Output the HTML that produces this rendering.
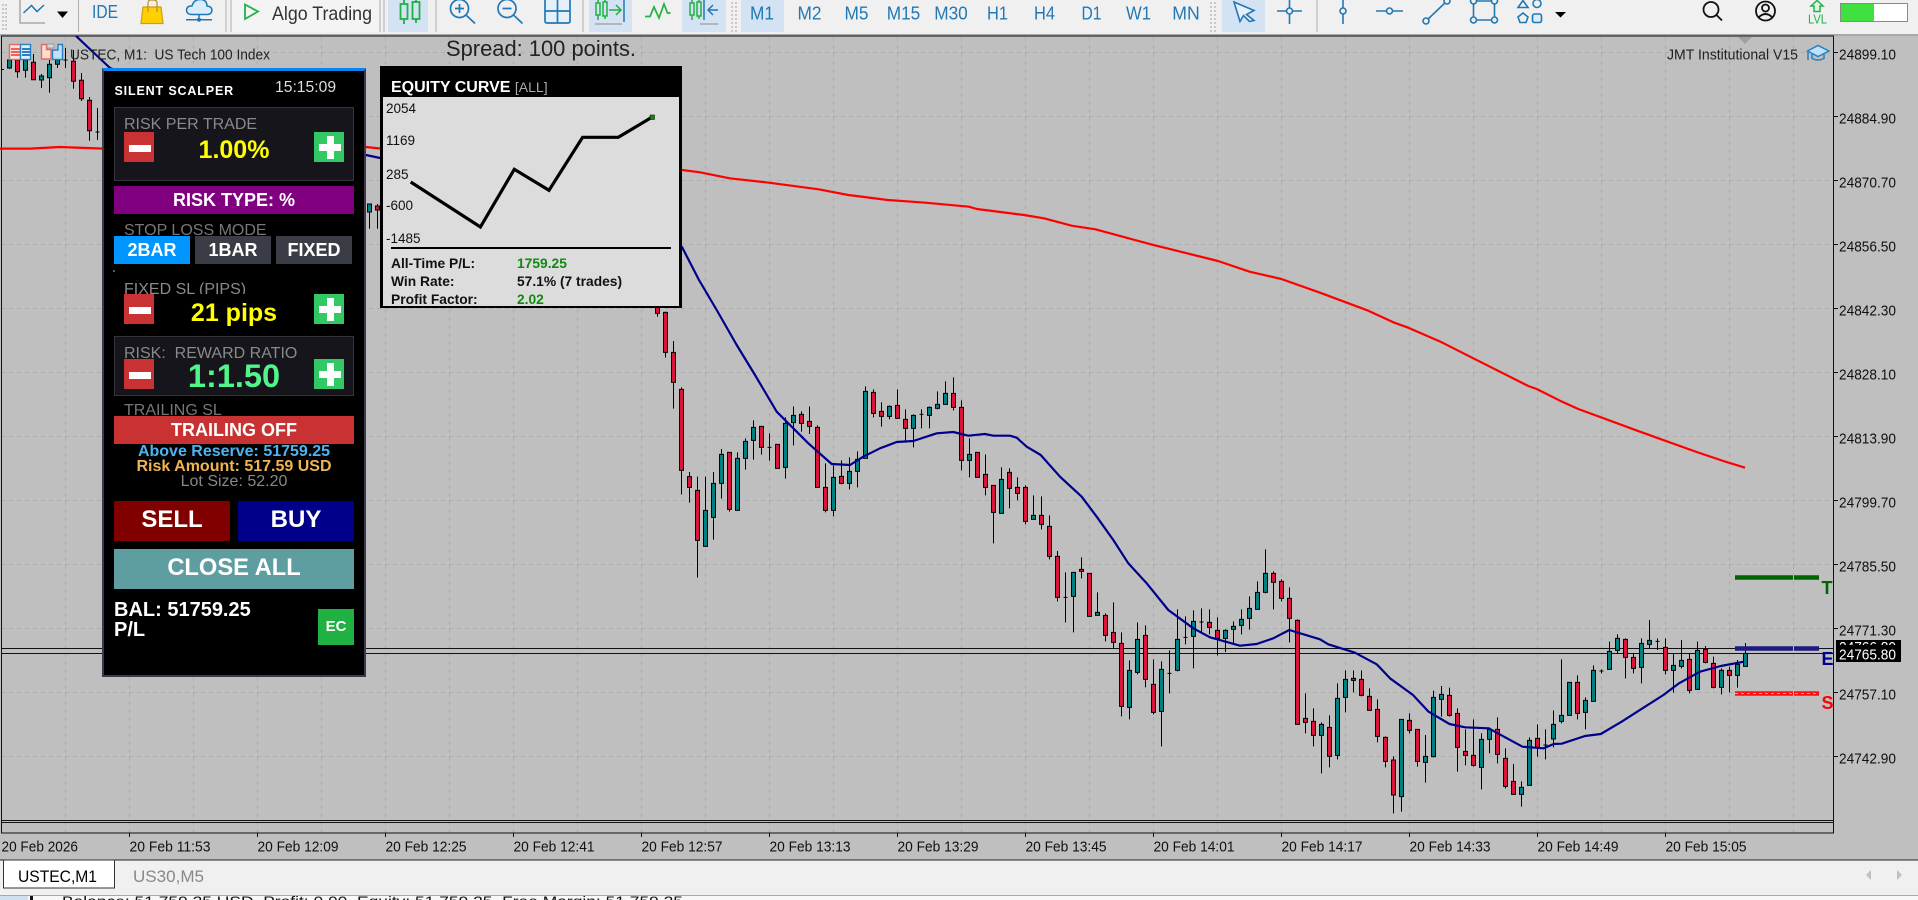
<!DOCTYPE html>
<html><head><meta charset="utf-8"><title>USTEC,M1</title>
<style>
html,body{margin:0;padding:0;width:1918px;height:900px;overflow:hidden;background:#bfbfbf}
body{position:relative;font-family:"Liberation Sans",Arial,sans-serif;filter:blur(.3px)}
svg{position:absolute;left:0;top:0}
svg text{font-family:"Liberation Sans",Arial,sans-serif}
.b{position:absolute}
.t{position:absolute;white-space:nowrap;text-align:center;overflow:hidden}
.l{text-align:left}
.bd{font-weight:bold}
</style></head><body>
<svg width="1918" height="900" viewBox="0 0 1918 900" xmlns="http://www.w3.org/2000/svg">
<defs><clipPath id="cc"><rect x="0" y="36" width="1833.5" height="797"/></clipPath></defs>
<!-- backgrounds -->
<rect width="1918" height="900" fill="#bfbfbf"/>
<rect width="1918" height="34" fill="#f0f0f0"/>
<rect y="34" width="1918" height="2" fill="#a8a8a8"/>
<!-- grid -->
<g stroke="#adadad" stroke-width="1" stroke-dasharray="4 4" fill="none">
<path d="M1 52.5H1834M1 116.5H1834M1 180.5H1834M1 244.5H1834M1 308.5H1834M1 372.5H1834M1 436.5H1834M1 500.5H1834M1 564.5H1834M1 628.5H1834M1 692.5H1834M1 756.5H1834"/>
<path d="M65.5 37V833M129.5 37V833M193.5 37V833M257.5 37V833M321.5 37V833M385.5 37V833M449.5 37V833M513.5 37V833M577.5 37V833M641.5 37V833M705.5 37V833M769.5 37V833M833.5 37V833M897.5 37V833M961.5 37V833M1025.5 37V833M1089.5 37V833M1153.5 37V833M1217.5 37V833M1281.5 37V833M1345.5 37V833M1409.5 37V833M1473.5 37V833M1537.5 37V833M1601.5 37V833M1665.5 37V833M1729.5 37V833M1793.5 37V833"/>
</g>
<!-- frame -->
<path d="M1.5 833V36H1833.5V833ZM1 820.5H1834M1 822.5H1834M1 648.5H1834M1 653.5H1834" fill="none" stroke="#111" stroke-width="1"/>
<path d="M129.5 833v4M257.5 833v4M385.5 833v4M513.5 833v4M641.5 833v4M769.5 833v4M897.5 833v4M1025.5 833v4M1153.5 833v4M1281.5 833v4M1409.5 833v4M1537.5 833v4M1665.5 833v4M1834 52.5h4M1834 116.5h4M1834 180.5h4M1834 244.5h4M1834 308.5h4M1834 372.5h4M1834 436.5h4M1834 500.5h4M1834 564.5h4M1834 628.5h4M1834 692.5h4M1834 756.5h4" stroke="#111" stroke-width="1" fill="none"/>
<path d="M1738 37H1752L1745 44Z" fill="#a0a0a0"/>
<!-- left candles -->
<g stroke="#000" stroke-width="1" clip-path="url(#cc)">
<path fill="none" d="M9.5 50V69M17.5 50V77.7M25.5 50V77.7M33.5 54V80M41.5 74V88M49.5 60V92.7M57.5 50V68M65.5 48V68M63.5 60h4M73.5 50V88.7M81.5 73V101M89.5 97V140.7M97.5 108V140M95.5 132h4M1 69.5h3M369.5 204V228.7M377.5 204V228.7"/>
<path fill="#dc143c" d="M15.5 60h4V71.7h-4zM31.5 62.3h4V79.7h-4zM71.5 61.3h4V81.3h-4zM79.5 80.3h4V98.7h-4zM87.5 100.3h4V130.7h-4zM375.5 206h4V210h-4z"/>
<path fill="#008080" d="M7.5 60h4V68h-4zM23.5 60h4V70.3h-4zM39.5 76h4V80h-4zM47.5 64.3h4V77.7h-4zM55.5 60h4V64.3h-4zM367.5 204h4V212h-4z"/>
</g>
<g stroke="#000" fill="none">
<!-- A -->
<g transform="translate(657.5,280) scale(8,.33333)">
<path vector-effect="non-scaling-stroke" d="M0 85V110M1 95V233M2 183V386M3 322V643M4 576V668M5 590V893M6 590V800M7 576V779M8 507V656M9 517V695M10 517V691M11 475V569M12 421V539M13 439V524M14 460V542M16 412V596M17 379V496M18 394V455M19 379V462M20 436V622M21 550V697M22 556V709M23 541V613M24 532V628M25 514V622M26 319V535M27 328V412M28 367V440M29 376V418M30 328V415M31 388V484M32 403V502M33 388V445M34 379V445M35 334V388M36 304V373M37 292V391M38 361V571M39 475V592M41 523V646M42 616V790M43 562V700M44 565V685M45 592V661M46 616V733M47 646V718M48 649V748M49 706V838M13.75 502h.5M32.75 403h.5"/>
<path vector-effect="non-scaling-stroke" fill="#dc143c" d="M-.25 70h.5V100h-.5zM.75 97h.5V217h-.5zM1.75 217h.5V307h-.5zM2.75 328h.5V571h-.5zM3.75 590h.5V622h-.5zM4.75 631h.5V781h-.5zM8.75 517h.5V688h-.5zM12.75 439h.5V502h-.5zM14.75 493h.5V565h-.5zM17.75 403h.5V430h-.5zM18.75 424h.5V439h-.5zM19.75 442h.5V622h-.5zM20.75 622h.5V691h-.5zM22.75 589h.5V610h-.5zM26.75 337h.5V400h-.5zM27.75 394h.5V409h-.5zM29.75 376h.5V415h-.5zM30.75 418h.5V445h-.5zM36.75 340h.5V382h-.5zM37.75 382h.5V541h-.5zM39.75 517h.5V592h-.5zM40.75 583h.5V622h-.5zM41.75 616h.5V697h-.5zM43.75 577h.5V625h-.5zM44.75 622h.5V640h-.5zM45.75 622h.5V724h-.5zM47.75 706h.5V733h-.5zM48.75 739h.5V829h-.5z"/>
<path vector-effect="non-scaling-stroke" fill="#008080" d="M5.75 691h.5V799h-.5zM6.75 610h.5V712h-.5zM7.75 523h.5V610h-.5zM9.75 535h.5V691h-.5zM10.75 484h.5V535h-.5zM11.75 442h.5V481h-.5zM15.75 430h.5V562h-.5zM16.75 406h.5V428h-.5zM21.75 592h.5V691h-.5zM23.75 574h.5V610h-.5zM24.75 538h.5V574h-.5zM25.75 334h.5V535h-.5zM28.75 379h.5V409h-.5zM31.75 406h.5V445h-.5zM33.75 382h.5V406h-.5zM34.75 373h.5V385h-.5zM35.75 340h.5V373h-.5zM38.75 523h.5V541h-.5zM42.75 598h.5V700h-.5zM46.75 706h.5V718h-.5z"/>
</g>
<!-- B -->
<g transform="translate(657.5,500) scale(8,.33333)">
<path vector-effect="non-scaling-stroke" d="M50 153V304M51 217V367M52 217V397M53 172V235M55 277V346M56 340V424M57 307V445M58 397V649M59 481V658M60 367V523M61 376V562M62 478V643M63 484V739M64 451V580M65 328V514M66 349V433M67 331V505M68 325V400M69 328V403M70 352V466M71 388V456M72 364V433M73 328V403M74 289V389M75 244V328M76 148V280M77 214V328M78 238V304M79 262V427M80 358V673M81 580V700M82 625V739M83 667V820M84 646V802M85 550V778M86 511V637M87 511V577M88 511V589M89 565V631M90 598V727M91 709V802M50.75 292h.5M63.75 520h.5M65.75 412h.5M67.75 366h.5"/>
<path vector-effect="non-scaling-stroke" fill="#dc143c" d="M49.75 169h.5V292h-.5zM52.75 208h.5V214h-.5zM53.75 220h.5V349h-.5zM55.75 346h.5V406h-.5zM56.75 397h.5V427h-.5zM57.75 430h.5V619h-.5zM60.75 406h.5V538h-.5zM61.75 553h.5V637h-.5zM68.75 367h.5V382h-.5zM69.75 391h.5V415h-.5zM76.75 220h.5V247h-.5zM77.75 244h.5V295h-.5zM78.75 295h.5V355h-.5zM79.75 361h.5V673h-.5zM80.75 655h.5V667h-.5zM81.75 664h.5V706h-.5zM83.75 682h.5V769h-.5zM86.75 535h.5V541h-.5zM87.75 538h.5V586h-.5zM88.75 589h.5V631h-.5zM89.75 628h.5V709h-.5zM90.75 712h.5V784h-.5z"/>
<path vector-effect="non-scaling-stroke" fill="#008080" d="M51.75 217h.5V289h-.5zM54.75 337h.5V346h-.5zM58.75 511h.5V622h-.5zM59.75 418h.5V517h-.5zM62.75 508h.5V634h-.5zM64.75 418h.5V511h-.5zM66.75 364h.5V409h-.5zM70.75 391h.5V415h-.5zM71.75 379h.5V388h-.5zM72.75 358h.5V376h-.5zM73.75 325h.5V355h-.5zM74.75 277h.5V328h-.5zM75.75 220h.5V277h-.5zM82.75 673h.5V706h-.5zM84.75 595h.5V766h-.5zM85.75 538h.5V592h-.5z"/>
</g>
<!-- C -->
<g transform="translate(657.5,540) scale(8,.33333)">
<path vector-effect="non-scaling-stroke" d="M92 649V820M93 538V815M94 520V580M95 568V680M96 585V728M97 452V652M98 438V530M99 443V530M100 505V695M101 568V676M102 538V680M103 580V748M104 562V640M105 532V670M106 625V745M107 672V763M108 724V800M109 592V736M110 553V650M111 568V658M112 511V622M113 358V550M114 427V526M115 406V538M116 472V568M117 376V484M118 388V400M119 305V388M120 283V340M121 295V415M122 340V400M123 295V430M124 240V325M125 295V330M126 295V403M127 340V458M128 300V385M129 340V460M130 305V450M131 318V370M132 350V445M133 385V463M134 380V457M135 360V443M136 309V379M110.75 615h.5M117.75 393h.5M124.75 304h.5"/>
<path vector-effect="non-scaling-stroke" fill="#dc143c" d="M91.75 660h.5V765h-.5zM93.75 541h.5V571h-.5zM94.75 568h.5V664h-.5zM98.75 466h.5V526h-.5zM99.75 520h.5V622h-.5zM100.75 634h.5V646h-.5zM101.75 646h.5V676h-.5zM104.75 568h.5V643h-.5zM105.75 655h.5V739h-.5zM106.75 724h.5V763h-.5zM109.75 595h.5V622h-.5zM114.75 427h.5V520h-.5zM120.75 298h.5V352h-.5zM121.75 352h.5V385h-.5zM125.75 322h.5V391h-.5zM128.75 358h.5V451h-.5zM130.75 328h.5V367h-.5zM131.75 370h.5V442h-.5zM133.75 391h.5V406h-.5z"/>
<path vector-effect="non-scaling-stroke" fill="#008080" d="M92.75 538h.5V770h-.5zM95.75 649h.5V667h-.5zM96.75 472h.5V650h-.5zM97.75 463h.5V478h-.5zM102.75 598h.5V682h-.5zM103.75 568h.5V598h-.5zM107.75 742h.5V763h-.5zM108.75 601h.5V736h-.5zM111.75 553h.5V597h-.5zM112.75 526h.5V544h-.5zM113.75 427h.5V526h-.5zM115.75 481h.5V517h-.5zM116.75 391h.5V484h-.5zM118.75 334h.5V388h-.5zM119.75 295h.5V331h-.5zM122.75 310h.5V382h-.5zM123.75 301h.5V313h-.5zM126.75 376h.5V391h-.5zM127.75 361h.5V379h-.5zM129.75 331h.5V448h-.5zM132.75 391h.5V442h-.5zM134.75 373h.5V406h-.5zM135.75 340h.5V379h-.5z"/>
</g>
</g>
<!-- moving averages -->
<g fill="none" stroke-width="2.2" stroke-linejoin="round" clip-path="url(#cc)">
<path stroke="#ff0000" d="M0 148.6L30 148.6L60 147L100 148.5L366 147L380 148.5L682 170L700 172.3L729.7 178.3L769 182.7L818.6 189.3L848.3 195L887.8 200L925.4 202.7L968.9 206.7L976.8 209L1024 215L1044 218.3L1071.7 225.7L1095.4 229.3L1150.8 244.3L1218 261L1249.6 271.7L1281.3 279L1320 292.7L1368.3 310.7L1393.3 322.3L1408.3 327.7L1441.7 342.3L1473.3 358.3L1528.3 386L1536.7 389L1560 400.7L1578.3 409L1640 431.7L1696.7 452L1723.3 461L1745 467.7"/>
<path stroke="#00008b" d="M76 36L110 68L366 155L380 158L682 247L699 280L716.7 310L736.7 345L755 375L776.7 411.7L808.3 443.3L831.7 464L850 465L863.3 456.7L880 448.3L896.7 442L913.3 441L936.7 433.3L953.3 432L968.3 435.7L985 434L993.3 435.7L1010 435.7L1016.7 437.7L1026.7 446.7L1040.7 455L1060 476.7L1081.7 496.7L1096.7 516.7L1113.3 540L1128.3 563.3L1146.7 583.3L1168.3 610L1193.3 628.3L1210 637.3L1240 645.7L1256.7 644L1273.3 638.3L1289.3 630L1320 639.3L1328.3 644.3L1355 652.7L1376.7 664.3L1390 678.3L1413 695L1428.6 711.7L1449.5 724L1465 727.3L1488.6 728.3L1504 736.7L1522.5 746.7L1543.4 748.3L1553.8 744L1561.7 743.7L1585 736L1600.8 734L1621.6 721.7L1642.5 708.3L1663.4 695L1679 683.3L1700 671.7L1720.8 666L1744 661.7"/>
</g>
<!-- order lines -->
<path d="M1735 577.5H1819" stroke="#006400" stroke-width="4.5"/>
<path d="M1735 648.5H1819" stroke="#1c1c80" stroke-width="4.5"/>
<path d="M1735 693.5H1819" stroke="#ff1010" stroke-width="4.5"/>
<path d="M1735 693.5H1819" stroke="#f0a0a0" stroke-width="1" stroke-dasharray="3 3"/>
<path d="M1793.5 575V580M1793.5 646V651M1793.5 691V696" stroke="#bbb"/>
<g clip-path="url(#cc)" font-weight="bold" font-size="18">
<text x="1821.5" y="594" fill="#006400">TP</text>
<text x="1821.5" y="665" fill="#00008b">EN</text>
<text x="1821.5" y="709" fill="#ff0000">SL</text>
</g>
<!-- price scale -->
<g font-size="15" fill="#111" lengthAdjust="spacingAndGlyphs">
<text x="1839" y="59.5" textLength="57" lengthAdjust="spacingAndGlyphs">24899.10</text><text x="1839" y="123.5" textLength="57" lengthAdjust="spacingAndGlyphs">24884.90</text><text x="1839" y="187.5" textLength="57" lengthAdjust="spacingAndGlyphs">24870.70</text><text x="1839" y="251.5" textLength="57" lengthAdjust="spacingAndGlyphs">24856.50</text><text x="1839" y="315.5" textLength="57" lengthAdjust="spacingAndGlyphs">24842.30</text><text x="1839" y="379.5" textLength="57" lengthAdjust="spacingAndGlyphs">24828.10</text><text x="1839" y="443.5" textLength="57" lengthAdjust="spacingAndGlyphs">24813.90</text><text x="1839" y="507.5" textLength="57" lengthAdjust="spacingAndGlyphs">24799.70</text><text x="1839" y="571.5" textLength="57" lengthAdjust="spacingAndGlyphs">24785.50</text><text x="1839" y="635.5" textLength="57" lengthAdjust="spacingAndGlyphs">24771.30</text><text x="1839" y="699.5" textLength="57" lengthAdjust="spacingAndGlyphs">24757.10</text><text x="1839" y="763.5" textLength="57" lengthAdjust="spacingAndGlyphs">24742.90</text>
</g>
<rect x="1836" y="640" width="65" height="22" fill="#000"/>
<text x="1839" y="652" font-size="15" fill="#fff" textLength="57" lengthAdjust="spacingAndGlyphs">24766.80</text>
<rect x="1836" y="645" width="65" height="17" fill="#000"/>
<text x="1839" y="659.5" font-size="15" fill="#fff" textLength="57" lengthAdjust="spacingAndGlyphs">24765.80</text>
<!-- time scale -->
<g font-size="15" fill="#111">
<text x="1.5" y="851.5" textLength="76.5" lengthAdjust="spacingAndGlyphs">20 Feb 2026</text><text x="129.5" y="851.5" textLength="81" lengthAdjust="spacingAndGlyphs">20 Feb 11:53</text><text x="257.5" y="851.5" textLength="81" lengthAdjust="spacingAndGlyphs">20 Feb 12:09</text><text x="385.5" y="851.5" textLength="81" lengthAdjust="spacingAndGlyphs">20 Feb 12:25</text><text x="513.5" y="851.5" textLength="81" lengthAdjust="spacingAndGlyphs">20 Feb 12:41</text><text x="641.5" y="851.5" textLength="81" lengthAdjust="spacingAndGlyphs">20 Feb 12:57</text><text x="769.5" y="851.5" textLength="81" lengthAdjust="spacingAndGlyphs">20 Feb 13:13</text><text x="897.5" y="851.5" textLength="81" lengthAdjust="spacingAndGlyphs">20 Feb 13:29</text><text x="1025.5" y="851.5" textLength="81" lengthAdjust="spacingAndGlyphs">20 Feb 13:45</text><text x="1153.5" y="851.5" textLength="81" lengthAdjust="spacingAndGlyphs">20 Feb 14:01</text><text x="1281.5" y="851.5" textLength="81" lengthAdjust="spacingAndGlyphs">20 Feb 14:17</text><text x="1409.5" y="851.5" textLength="81" lengthAdjust="spacingAndGlyphs">20 Feb 14:33</text><text x="1537.5" y="851.5" textLength="81" lengthAdjust="spacingAndGlyphs">20 Feb 14:49</text><text x="1665.5" y="851.5" textLength="81" lengthAdjust="spacingAndGlyphs">20 Feb 15:05</text>
</g>
<!-- chart labels -->
<text x="70" y="59.5" font-size="15" fill="#222" textLength="200" lengthAdjust="spacingAndGlyphs" xml:space="preserve">USTEC, M1:  US Tech 100 Index</text>
<text x="446" y="56" font-size="22" fill="#222" textLength="190" lengthAdjust="spacingAndGlyphs">Spread: 100 points.</text>
<text x="1667" y="59.5" font-size="15" fill="#222" textLength="131" lengthAdjust="spacingAndGlyphs">JMT Institutional V15</text>
<!-- chart corner icons -->
<g stroke-width="1.4">
<rect x="9.5" y="44.5" width="11" height="15" fill="#ffe4e0" stroke="#e8665c"/>
<path d="M11 49h9M11 52h9M11 55h9" stroke="#e8665c" stroke-width="2"/>
<rect x="20.5" y="44.5" width="10" height="15" fill="#e0f0ff" stroke="#2a80c0"/>
<path d="M22 49h8M22 52h8M22 55h8" stroke="#2a80c0" stroke-width="2"/>
<path d="M41.5 44.5h5v5h4.5v9.5h-9.5z" fill="#ffdcd0" stroke="#e8665c"/>
<path d="M58 44.5h4.5v15h-10v-9.5h5.5z" fill="#bfe0fa" stroke="#2a80c0"/>
<rect x="47" y="44" width="7" height="4" fill="#d8d8d8" stroke="#999" stroke-width="1"/>
</g>
<g stroke="#2a80c0" stroke-width="1.5" fill="#bfe0fa">
<path d="M1807.5 51L1818 45.5L1829 51L1818 56.5Z"/>
<path d="M1812 54V58.5Q1818 61.5 1824 58.5V54" fill="none"/>
<path d="M1808 52V60" fill="none"/>
</g>
<!-- toolbar -->
<path d="M3 4V32M6 4V32M736 2V32M732 2V32M1211 2V32M1215 2V32" stroke="#c8c8c8" stroke-width="2" stroke-dasharray="2 2"/>
<path d="M78.5 0V32M226 0V32M231 0V32M380 0V32M384 0V32M436 0V32M583 0V32M1317 0V32" stroke="#b0b0b0" stroke-width="1"/>
<rect x="232" y="0" width="147" height="32" fill="#f4f4f4"/>
<rect x="388" y="0" width="40" height="32" fill="#d3e3f3"/>
<rect x="589" y="0" width="43" height="32" fill="#d3e3f3"/>
<rect x="682" y="0" width="44" height="32" fill="#d3e3f3"/>
<rect x="741" y="0" width="43" height="32" fill="#d3e3f3"/>
<rect x="1222" y="0" width="43" height="32" fill="#d3e3f3"/>
<!-- line chart icon -->
<path d="M20 0V23H45" fill="none" stroke="#a8a8a8" stroke-width="1.5"/>
<path d="M23.5 13L31.5 5.5L37 11.5L44 5" fill="none" stroke="#2278b5" stroke-width="1.5"/>
<path d="M57 11.5H68L62.5 18Z" fill="#000"/>
<text x="92" y="18" font-size="18" fill="#2278b5" textLength="26" lengthAdjust="spacingAndGlyphs">IDE</text>
<!-- bag -->
<path d="M143 7H161L163 23.5H141Z" fill="#ffd000" stroke="#d09a1a" stroke-width="1.2"/>
<path d="M148 12V3Q148 0 151 0H153Q157 0 157 3V12" fill="none" stroke="#c08c20" stroke-width="1.2"/>
<!-- cloud -->
<path d="M191 14.5Q186.5 14 186.5 10Q187 5.5 192 6Q194 -1 201 -0.5Q207 0 207 6Q212 6.5 212 10.5Q211.5 14.5 207 14.5Z" fill="#d8ecfb" stroke="#2278b5" stroke-width="1.5"/>
<path d="M199 14.5V19M186 19.7H212" stroke="#2278b5" stroke-width="1.5"/><circle cx="199" cy="19.7" r="2" fill="#2278b5"/>
<!-- algo -->
<path d="M245 4.5V19L258 11.5Z" fill="none" stroke="#22b14c" stroke-width="1.8"/>
<text x="272" y="20" font-size="19.5" fill="#333" textLength="100" lengthAdjust="spacingAndGlyphs">Algo Trading</text>
<!-- candles icon -->
<g fill="none" stroke="#1fb141" stroke-width="1.8">
<rect x="400.5" y="4" width="7" height="15"/><rect x="412.5" y="2" width="7" height="17"/>
<path d="M404 0V4M404 19V24M416 0V2M416 19V23"/>
</g>
<!-- zoom icons -->
<g fill="none" stroke="#2278b5" stroke-width="1.7">
<circle cx="459.5" cy="8.5" r="9"/><path d="M466 15L475 23.5M455 8.5H464M459.5 4V13"/>
<circle cx="507" cy="8.5" r="9"/><path d="M513.5 15L522.5 23.5M502.5 8.5H511.5"/>
<path d="M547 -1H568Q570 -1 570 1V21Q570 23 568 23H547Q545 23 545 21V1Q545 -1 547 -1Z M557.5 -1V23M545 11H570" fill="#e6f0fa"/>
</g>
<!-- autoscroll -->
<g fill="none" stroke="#1fb141" stroke-width="1.5">
<rect x="596" y="3" width="4" height="12"/><rect x="603" y="2" width="4" height="14"/><path d="M598 0V3M598 15V20M605 0V2M605 16V19"/>
<path d="M645 16.5H650L654 7L659 18L664 4L667.5 13H670.5" stroke-width="1.7"/>
<rect x="690" y="3" width="4" height="12"/><rect x="697" y="2" width="4" height="14"/><path d="M692 0V3M692 15V20M699 0V2M699 16V19"/>
<path d="M609 10H621M616 5L621 10L616 15" stroke="#1fb141"/>
</g>
<path d="M624 0V22M704 0V20M718 10H708M713 5L708 10L713 15" fill="none" stroke="#2278b5" stroke-width="1.5"/>
<path d="M595 24H622M700 24H718" stroke="#a8a8a8" stroke-width="1.5"/>
<!-- timeframes -->
<g font-size="18.5" fill="#2278b5" text-anchor="middle">
<text x="762" y="19.5" textLength="24" lengthAdjust="spacingAndGlyphs">M1</text><text x="809.5" y="19.5" textLength="24" lengthAdjust="spacingAndGlyphs">M2</text><text x="856.5" y="19.5" textLength="24" lengthAdjust="spacingAndGlyphs">M5</text><text x="903.5" y="19.5" textLength="33.5" lengthAdjust="spacingAndGlyphs">M15</text><text x="951" y="19.5" textLength="33.5" lengthAdjust="spacingAndGlyphs">M30</text><text x="997.5" y="19.5" textLength="21" lengthAdjust="spacingAndGlyphs">H1</text><text x="1044.5" y="19.5" textLength="21" lengthAdjust="spacingAndGlyphs">H4</text><text x="1091.5" y="19.5" textLength="20" lengthAdjust="spacingAndGlyphs">D1</text><text x="1138.5" y="19.5" textLength="25" lengthAdjust="spacingAndGlyphs">W1</text><text x="1186" y="19.5" textLength="27.5" lengthAdjust="spacingAndGlyphs">MN</text>
</g>
<!-- tools -->
<g fill="none" stroke="#2278b5" stroke-width="1.6">
<path d="M1234 2L1254 10.5L1246.5 14.5L1254 20.5L1249.5 21.5L1243.5 15.5L1240 21.5Z" fill="#e6f0fa"/>
<path d="M1277 11H1302M1289.5 0V24"/><circle cx="1289.5" cy="11" r="3" fill="#f0f0f0"/>
<path d="M1343 0V24"/><circle cx="1343" cy="11" r="3" fill="#f0f0f0"/>
<path d="M1376 11H1403"/><circle cx="1389.5" cy="11" r="3" fill="#f0f0f0"/>
<path d="M1426 21L1447 1"/><circle cx="1426" cy="21" r="3" fill="#f0f0f0"/><circle cx="1447" cy="1" r="3" fill="#f0f0f0"/>
<path d="M1473.5 1H1494.5V20H1473.5Z"/><circle cx="1473.5" cy="1" r="3" fill="#f0f0f0"/><circle cx="1494.5" cy="1" r="3" fill="#f0f0f0"/><circle cx="1473.5" cy="20" r="3" fill="#f0f0f0"/><circle cx="1494.5" cy="20" r="3" fill="#f0f0f0"/>
<path d="M1523 0.5L1528 7.5H1518Z"/><circle cx="1537" cy="3.5" r="4"/>
<path d="M1523 13L1528 17L1526 22.5H1520L1518 17Z"/><rect x="1532.5" y="14" width="9" height="8.5" rx="2" fill="#d8ecfb"/>
</g>
<path d="M1555 12H1566L1560.5 17.5Z" fill="#000"/>
<g fill="none" stroke="#111" stroke-width="1.8">
<circle cx="1711" cy="9.5" r="7.5"/><path d="M1716.5 15L1722 20.5"/>
<circle cx="1765.5" cy="11" r="9.5"/><circle cx="1765.5" cy="8" r="3.5"/><path d="M1758.5 17.5Q1765.5 10.5 1772.5 17.5"/>
</g>
<path d="M1817 0.5L1823 6H1820V11.5H1814V6H1811Z" fill="#d8f8e0" stroke="#22b14c" stroke-width="1.5"/>
<text x="1808" y="23.5" font-size="13" fill="#22b14c" textLength="19" lengthAdjust="spacingAndGlyphs">LVL</text>
<rect x="1840.5" y="3.5" width="67" height="18" fill="#fff" stroke="#8a8a8a" stroke-width="1"/>
<rect x="1841" y="4" width="33" height="17" fill="#40e040"/>
<!-- bottom tabs -->
<rect y="860" width="1918" height="35" fill="#f0f0f0"/>
<rect y="859.5" width="1918" height="1" fill="#222"/>
<rect x="3.5" y="860" width="111" height="28" fill="#fff" stroke="#333" stroke-width="1"/>
<text x="18" y="882" font-size="17" fill="#000" textLength="79" lengthAdjust="spacingAndGlyphs">USTEC,M1</text>
<text x="133" y="882" font-size="17" fill="#888" textLength="71" lengthAdjust="spacingAndGlyphs">US30,M5</text>
<path d="M1871 870L1866 875L1871 880Z" fill="#c0c0c0"/><path d="M1897 870L1902 875L1897 880Z" fill="#c0c0c0"/>
<rect y="895" width="1918" height="5" fill="#f8f8f8"/>
<rect y="895" width="1918" height="1" fill="#a8a8a8"/>
<rect y="896" width="28" height="4" fill="#d0dff0"/>
<rect x="30" y="896" width="3" height="4" fill="#111"/>
<text x="62" y="906" font-size="14" fill="#111" textLength="621" lengthAdjust="spacingAndGlyphs" xml:space="preserve">Balance: 51 759.25 USD  Profit: 0.00  Equity: 51 759.25  Free Margin: 51 759.25</text>
</svg>

<!-- Silent Scalper panel -->
<div class="b" style="left:102px;top:68px;width:260px;height:604px;background:#000;border:2px solid #3a3a4a;border-top:3px solid #0a84ee"></div>
<div class="t l bd" style="left:114.5px;top:83px;height:16px;line-height:16px;font-size:12.5px;color:#fff;letter-spacing:.85px">SILENT SCALPER</div>
<div class="t l" style="left:275px;top:79px;height:18px;line-height:18px;font-size:15.7px;color:#ddd">15:15:09</div>

<div class="b" style="left:114px;top:107px;width:238px;height:72px;background:#15151b;border:1px solid #33333c"></div>
<div class="t l" style="left:124px;top:115px;height:19px;line-height:19px;font-size:16px;color:#8a8a8a">RISK PER TRADE</div>
<div class="b" style="left:124px;top:132px;width:30px;height:30px;background:#c83232"></div>
<div class="b" style="left:129px;top:145px;width:22px;height:7px;background:#fff"></div>
<div class="b" style="left:314px;top:132px;width:30px;height:30px;background:#32c864"></div>
<div class="b" style="left:319px;top:144px;width:22px;height:7px;background:#fff"></div>
<div class="b" style="left:326.5px;top:136px;width:7px;height:23px;background:#fff"></div>
<div class="t bd" style="left:154px;top:135px;width:160px;height:30px;line-height:30px;font-size:25px;color:#ffff00">1.00%</div>

<div class="t bd" style="left:114px;top:186px;width:240px;height:28px;line-height:28px;font-size:18px;background:#800080;color:#fff">RISK TYPE: %</div>
<div class="t l" style="left:124px;top:221px;height:15px;line-height:20px;font-size:16px;color:#777">STOP LOSS MODE</div>
<div class="t bd" style="left:114px;top:236px;width:76px;height:28px;line-height:28px;font-size:18px;background:#0096ff;color:#fff">2BAR</div>
<div class="t bd" style="left:195px;top:236px;width:76px;height:28px;line-height:28px;font-size:18px;background:#3a3c46;color:#fff">1BAR</div>
<div class="t bd" style="left:276px;top:236px;width:76px;height:28px;line-height:28px;font-size:18px;background:#3a3c46;color:#fff">FIXED</div>
<div class="b" style="left:113px;top:270px;width:2px;height:2px;background:#555"></div>

<div class="t l" style="left:124px;top:280px;height:14px;line-height:20px;font-size:16px;color:#8a8a8a">FIXED SL (PIPS)</div>
<div class="b" style="left:124px;top:294px;width:30px;height:30px;background:#c83232"></div>
<div class="b" style="left:129px;top:307px;width:22px;height:7px;background:#fff"></div>
<div class="b" style="left:314px;top:294px;width:30px;height:30px;background:#32c864"></div>
<div class="b" style="left:319px;top:306px;width:22px;height:7px;background:#fff"></div>
<div class="b" style="left:326.5px;top:298px;width:7px;height:23px;background:#fff"></div>
<div class="t bd" style="left:154px;top:298px;width:160px;height:30px;line-height:30px;font-size:25px;color:#ffff00">21 pips</div>

<div class="b" style="left:114px;top:336px;width:238px;height:58px;background:#15151b;border:1px solid #33333c"></div>
<div class="t l" style="left:124px;top:344px;height:19px;line-height:19px;font-size:16px;color:#8a8a8a;white-space:pre">RISK:  REWARD RATIO</div>
<div class="b" style="left:124px;top:359px;width:30px;height:30px;background:#c83232"></div>
<div class="b" style="left:129px;top:372px;width:22px;height:7px;background:#fff"></div>
<div class="b" style="left:314px;top:359px;width:30px;height:30px;background:#32c864"></div>
<div class="b" style="left:319px;top:371px;width:22px;height:7px;background:#fff"></div>
<div class="b" style="left:326.5px;top:363px;width:7px;height:23px;background:#fff"></div>
<div class="t bd" style="left:154px;top:358px;width:160px;height:36px;line-height:36px;font-size:32.5px;color:#50f58c">1:1.50</div>

<div class="t l" style="left:124px;top:401px;height:15px;line-height:19px;font-size:16px;color:#777">TRAILING SL</div>
<div class="t bd" style="left:114px;top:416px;width:240px;height:28px;line-height:28px;font-size:18px;background:#c83232;color:#fff">TRAILING OFF</div>
<div class="t bd" style="left:114px;top:444px;width:240px;height:16px;line-height:16px;font-size:16px;color:#4db4f0">Above Reserve: 51759.25</div>
<div class="t bd" style="left:114px;top:459px;width:240px;height:16px;line-height:16px;font-size:16px;color:#f0b450">Risk Amount: 517.59 USD</div>
<div class="t" style="left:114px;top:474px;width:240px;height:16px;line-height:16px;font-size:16px;color:#888">Lot Size: 52.20</div>

<div class="t bd" style="left:114px;top:501px;width:116px;height:40px;line-height:38px;font-size:24px;background:#800000;color:#fff">SELL</div>
<div class="t bd" style="left:238px;top:501px;width:116px;height:40px;line-height:38px;font-size:24px;background:#00008b;color:#fff">BUY</div>
<div class="t bd" style="left:114px;top:549px;width:240px;height:40px;line-height:39.5px;font-size:23.7px;background:#5f9ea0;color:#fff">CLOSE ALL</div>
<div class="t l bd" style="left:114px;top:600px;height:21px;line-height:21px;font-size:20px;color:#fff">BAL: 51759.25</div>
<div class="t l bd" style="left:114px;top:620px;height:21px;line-height:21px;font-size:20px;color:#fff">P/L</div>
<div class="t bd" style="left:318px;top:609px;width:36px;height:36px;line-height:36px;font-size:15px;background:#1fb141;color:#fff">EC</div>

<!-- Equity curve panel -->
<div class="b" style="left:380px;top:66px;width:302px;height:242px;background:#000"></div>
<div class="b" style="left:383px;top:97px;width:296px;height:208.5px;background:#dcdcdc"></div>
<div class="t l" style="left:391px;top:77px;height:20px;line-height:20px;font-size:16px;font-weight:bold;color:#fff">EQUITY CURVE <span style="font-weight:normal;font-size:14px;color:#aaa">[ALL]</span></div>
<div class="t l" style="left:386px;top:101px;height:16px;line-height:16px;font-size:13.5px;color:#111">2054</div>
<div class="t l" style="left:386px;top:133px;height:16px;line-height:16px;font-size:13.5px;color:#111">1169</div>
<div class="t l" style="left:386px;top:167px;height:16px;line-height:16px;font-size:13.5px;color:#111">285</div>
<div class="t l" style="left:386px;top:198px;height:16px;line-height:16px;font-size:13.5px;color:#111">-600</div>
<div class="t l" style="left:386px;top:231px;height:16px;line-height:16px;font-size:13.5px;color:#111">-1485</div>
<svg width="1918" height="900" viewBox="0 0 1918 900" style="pointer-events:none">
<path d="M410.7 182L480.4 227L514.3 169.3L549 190.3L582.6 137.3L618.3 137.3L651.8 117.3" fill="none" stroke="#000" stroke-width="3.2"/>
<rect x="650" y="115" width="4.5" height="4.5" fill="#118811" stroke="#000" stroke-width=".5"/>
<rect x="391" y="247" width="280" height="2" fill="#000"/>
</svg>
<div class="t l bd" style="left:391px;top:256px;height:16px;line-height:16px;font-size:13.8px;color:#111">All-Time P/L:</div>
<div class="t l bd" style="left:517px;top:256px;height:16px;line-height:16px;font-size:13.8px;color:#118811">1759.25</div>
<div class="t l bd" style="left:391px;top:274px;height:16px;line-height:16px;font-size:13.8px;color:#111">Win Rate:</div>
<div class="t l bd" style="left:517px;top:274px;height:16px;line-height:16px;font-size:13.8px;color:#111">57.1% (7 trades)</div>
<div class="t l bd" style="left:391px;top:291.5px;height:14px;line-height:16px;font-size:13.8px;color:#111">Profit Factor:</div>
<div class="t l bd" style="left:517px;top:291.5px;height:14px;line-height:16px;font-size:13.8px;color:#118811">2.02</div>
</body></html>
